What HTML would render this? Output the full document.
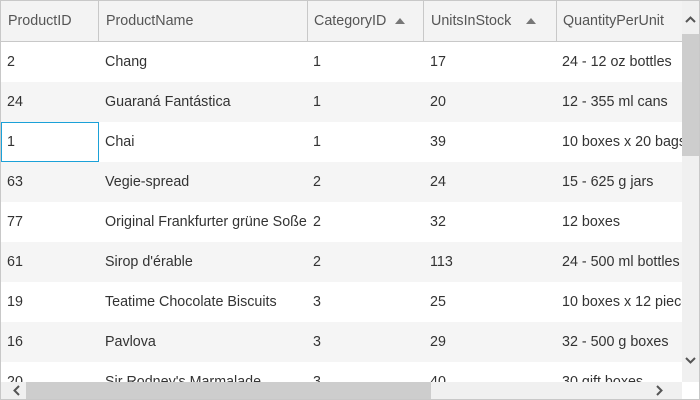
<!DOCTYPE html>
<html><head><meta charset="utf-8">
<style>
*{margin:0;padding:0;box-sizing:border-box}
body{width:700px;height:400px;overflow:hidden;background:#fff;font-family:"Liberation Sans",sans-serif;font-size:14.3px;color:#333}
#g{position:absolute;left:0;top:0;width:700px;height:400px;border:1px solid #c8c8c8;overflow:hidden}
.hdr{position:absolute;left:0;top:0;width:700px;height:41px;background:#f3f3f3;border-bottom:1px solid #c8c8c8}
.hc{position:absolute;top:0;height:40px;line-height:40px;color:#555;white-space:nowrap}
.vl{position:absolute;top:0;width:1px;height:40px;background:#c8c8c8}
.row{position:absolute;left:0;width:700px;height:40px;line-height:40px}
.row.alt{background:#f5f5f5}
.c{position:absolute;top:0;white-space:nowrap;color:#333}
.arr{position:absolute;top:17px;width:0;height:0;border-left:5px solid transparent;border-right:5px solid transparent;border-bottom:6px solid #777}
</style></head><body>
<div id="g">
<div class="hdr">
<div class="hc" style="left:7px">ProductID</div>
<div class="vl" style="left:97px"></div>
<div class="hc" style="left:105px">ProductName</div>
<div class="vl" style="left:306px"></div>
<div class="hc" style="left:313px">CategoryID</div>
<div class="arr" style="left:394px"></div>
<div class="vl" style="left:422px"></div>
<div class="hc" style="left:430px">UnitsInStock</div>
<div class="arr" style="left:525px"></div>
<div class="vl" style="left:555px"></div>
<div class="hc" style="left:562px">QuantityPerUnit</div>
</div>

<div class="row" style="top:41px"><span class="c" style="left:6px">2</span><span class="c" style="left:104px">Chang</span><span class="c" style="left:312px">1</span><span class="c" style="left:429px">17</span><span class="c" style="left:561px">24 - 12 oz bottles</span></div>
<div class="row alt" style="top:81px"><span class="c" style="left:6px">24</span><span class="c" style="left:104px">Guaraná Fantástica</span><span class="c" style="left:312px">1</span><span class="c" style="left:429px">20</span><span class="c" style="left:561px">12 - 355 ml cans</span></div>
<div class="row" style="top:121px"><div style="position:absolute;left:0;top:0;width:98px;height:40px;border:1px solid #1ba1d8"></div><span class="c" style="left:6px">1</span><span class="c" style="left:104px">Chai</span><span class="c" style="left:312px">1</span><span class="c" style="left:429px">39</span><span class="c" style="left:561px">10 boxes x 20 bags</span></div>
<div class="row alt" style="top:161px"><span class="c" style="left:6px">63</span><span class="c" style="left:104px">Vegie-spread</span><span class="c" style="left:312px">2</span><span class="c" style="left:429px">24</span><span class="c" style="left:561px">15 - 625 g jars</span></div>
<div class="row" style="top:201px"><span class="c" style="left:6px">77</span><span class="c" style="left:104px">Original Frankfurter grüne Soße</span><span class="c" style="left:312px;background:#fff">2</span><span class="c" style="left:429px">32</span><span class="c" style="left:561px">12 boxes</span></div>
<div class="row alt" style="top:241px"><span class="c" style="left:6px">61</span><span class="c" style="left:104px">Sirop d'érable</span><span class="c" style="left:312px">2</span><span class="c" style="left:429px">113</span><span class="c" style="left:561px">24 - 500 ml bottles</span></div>
<div class="row" style="top:281px"><span class="c" style="left:6px">19</span><span class="c" style="left:104px">Teatime Chocolate Biscuits</span><span class="c" style="left:312px">3</span><span class="c" style="left:429px">25</span><span class="c" style="left:561px">10 boxes x 12 pieces</span></div>
<div class="row alt" style="top:321px"><span class="c" style="left:6px">16</span><span class="c" style="left:104px">Pavlova</span><span class="c" style="left:312px">3</span><span class="c" style="left:429px">29</span><span class="c" style="left:561px">32 - 500 g boxes</span></div>
<div class="row" style="top:361px"><span class="c" style="left:6px">20</span><span class="c" style="left:104px">Sir Rodney's Marmalade</span><span class="c" style="left:312px">3</span><span class="c" style="left:429px">40</span><span class="c" style="left:561px">30 gift boxes</span></div>

<div style="position:absolute;left:681px;top:0;width:17px;height:381px;background:#f0f0f0"></div>
<div style="position:absolute;left:681px;top:33px;width:17px;height:122px;background:#cdcdcd"></div>
<svg style="position:absolute;left:681px;top:14px" width="17" height="10"><path d="M4 7 L8.5 2.5 L13 7" fill="none" stroke="#555" stroke-width="2"/></svg>
<svg style="position:absolute;left:681px;top:354px" width="17" height="10"><path d="M4 3 L8.5 7.5 L13 3" fill="none" stroke="#555" stroke-width="2"/></svg>
<div style="position:absolute;left:0;top:381px;width:681px;height:17px;background:#f0f0f0"></div>
<div style="position:absolute;left:25px;top:381px;width:405px;height:17px;background:#cdcdcd"></div>
<svg style="position:absolute;left:10px;top:381px" width="12" height="17"><path d="M8 4 L3.5 8.5 L8 13" fill="none" stroke="#555" stroke-width="2"/></svg>
<svg style="position:absolute;left:652px;top:381px" width="12" height="17"><path d="M4 4 L8.5 8.5 L4 13" fill="none" stroke="#555" stroke-width="2"/></svg>
<div style="position:absolute;left:681px;top:381px;width:17px;height:17px;background:#fff"></div>
</div>
</body></html>
